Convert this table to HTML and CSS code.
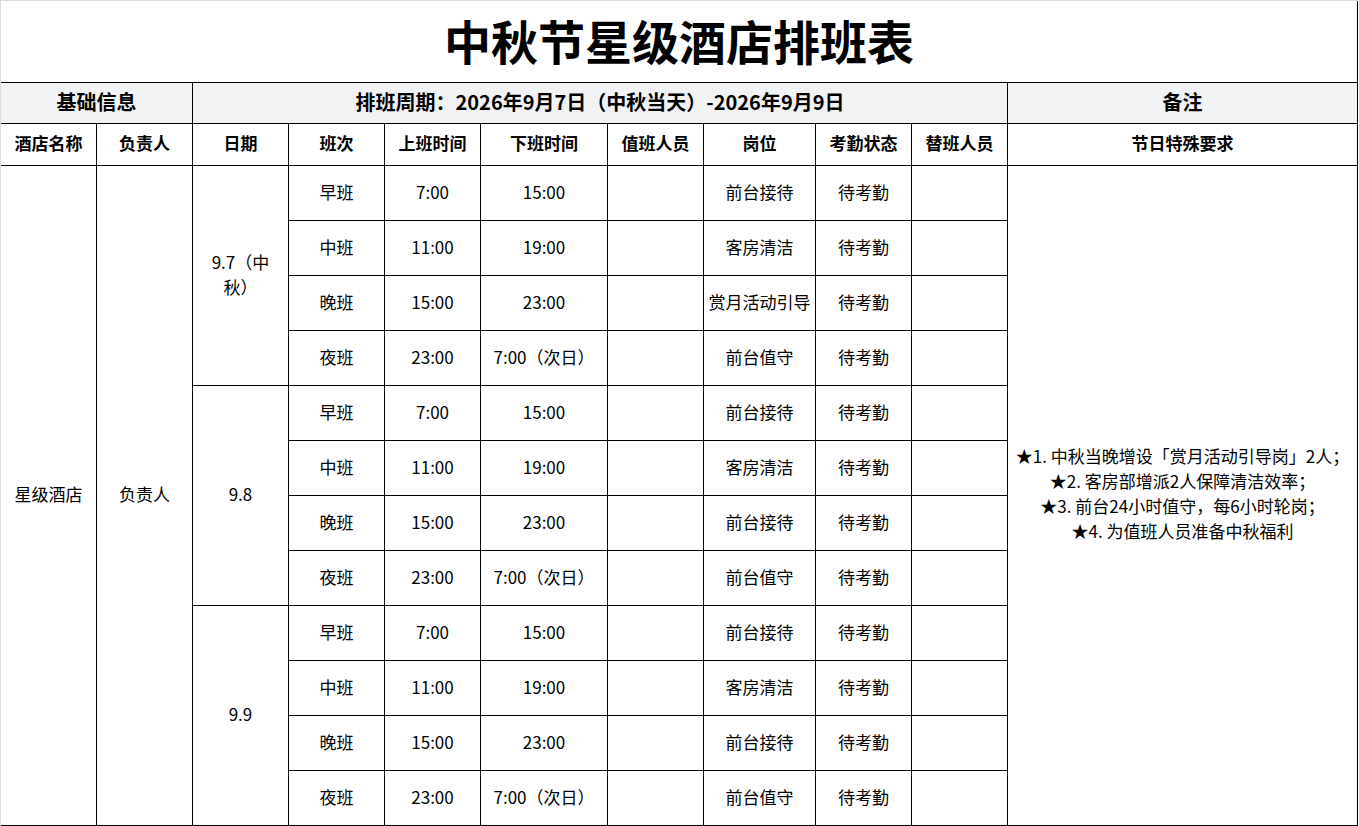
FILE: index.html
```html
<!DOCTYPE html>
<html lang="zh-CN">
<head>
<meta charset="utf-8">
<title>中秋节星级酒店排班表</title>
<link rel="stylesheet" href="styles.css">
</head>
<body>
<div class="sheet">
  <div class="cell title span-all">中秋节星级酒店排班表</div>

  <div class="cell head span-2">基础信息</div>
  <div class="cell head span-8">排班周期：2026年9月7日（中秋当天）-2026年9月9日</div>
  <div class="cell head">备注</div>

  <div class="cell sub">酒店名称</div>
  <div class="cell sub">负责人</div>
  <div class="cell sub">日期</div>
  <div class="cell sub">班次</div>
  <div class="cell sub">上班时间</div>
  <div class="cell sub">下班时间</div>
  <div class="cell sub">值班人员</div>
  <div class="cell sub">岗位</div>
  <div class="cell sub">考勤状态</div>
  <div class="cell sub">替班人员</div>
  <div class="cell sub">节日特殊要求</div>

  <div class="cell rows-12">星级酒店</div>
  <div class="cell rows-12">负责人</div>
  <div class="cell rows-4 date">9.7（中秋）</div>
  <div class="cell">早班</div><div class="cell">7:00</div><div class="cell">15:00</div><div class="cell"></div><div class="cell">前台接待</div><div class="cell">待考勤</div><div class="cell"></div>
  <div class="cell rows-12 notes">★1. 中秋当晚增设「赏月活动引导岗」2人；<br>★2. 客房部增派2人保障清洁效率；<br>★3. 前台24小时值守，每6小时轮岗；<br>★4. 为值班人员准备中秋福利</div>
  <div class="cell">中班</div><div class="cell">11:00</div><div class="cell">19:00</div><div class="cell"></div><div class="cell">客房清洁</div><div class="cell">待考勤</div><div class="cell"></div>
  <div class="cell">晚班</div><div class="cell">15:00</div><div class="cell">23:00</div><div class="cell"></div><div class="cell">赏月活动引导</div><div class="cell">待考勤</div><div class="cell"></div>
  <div class="cell">夜班</div><div class="cell">23:00</div><div class="cell">7:00（次日）</div><div class="cell"></div><div class="cell">前台值守</div><div class="cell">待考勤</div><div class="cell"></div>

  <div class="cell rows-4 date">9.8</div>
  <div class="cell">早班</div><div class="cell">7:00</div><div class="cell">15:00</div><div class="cell"></div><div class="cell">前台接待</div><div class="cell">待考勤</div><div class="cell"></div>
  <div class="cell">中班</div><div class="cell">11:00</div><div class="cell">19:00</div><div class="cell"></div><div class="cell">客房清洁</div><div class="cell">待考勤</div><div class="cell"></div>
  <div class="cell">晚班</div><div class="cell">15:00</div><div class="cell">23:00</div><div class="cell"></div><div class="cell">前台接待</div><div class="cell">待考勤</div><div class="cell"></div>
  <div class="cell">夜班</div><div class="cell">23:00</div><div class="cell">7:00（次日）</div><div class="cell"></div><div class="cell">前台值守</div><div class="cell">待考勤</div><div class="cell"></div>

  <div class="cell rows-4 date">9.9</div>
  <div class="cell">早班</div><div class="cell">7:00</div><div class="cell">15:00</div><div class="cell"></div><div class="cell">前台接待</div><div class="cell">待考勤</div><div class="cell"></div>
  <div class="cell">中班</div><div class="cell">11:00</div><div class="cell">19:00</div><div class="cell"></div><div class="cell">客房清洁</div><div class="cell">待考勤</div><div class="cell"></div>
  <div class="cell">晚班</div><div class="cell">15:00</div><div class="cell">23:00</div><div class="cell"></div><div class="cell">前台接待</div><div class="cell">待考勤</div><div class="cell"></div>
  <div class="cell">夜班</div><div class="cell">23:00</div><div class="cell">7:00（次日）</div><div class="cell"></div><div class="cell">前台值守</div><div class="cell">待考勤</div><div class="cell"></div>
</div>
</body>
</html>
```

FILE: styles.css
```css
html, body {
  margin: 0;
  padding: 0;
  background: #ffffff;
}

body {
  font-family: "Noto Sans CJK SC", "Noto Sans", sans-serif;
  color: #000000;
}

.sheet {
  display: grid;
  grid-template-columns: 96px 96px 96px 96px 96px 127px 96px 112px 96px 96px 350px;
  grid-template-rows: 82px 41px 42px repeat(12, 55px);
  width: 1358px;
  box-sizing: border-box;
  border-top: 1px solid #dcdcdc;
  border-left: 1px solid #dcdcdc;
}

.cell {
  box-sizing: border-box;
  border-right: 1px solid #000;
  border-bottom: 1px solid #000;
  display: flex;
  align-items: center;
  justify-content: center;
  text-align: center;
  font-size: 17px;
  line-height: 25px;
  padding-bottom: 4px;
  white-space: normal;
}

.span-all { grid-column: span 11; }
.span-2 { grid-column: span 2; }
.span-8 { grid-column: span 8; }
.rows-12 { grid-row: span 12; }
.rows-4 { grid-row: span 4; }

.title {
  font-size: 47px;
  font-weight: 700;
  line-height: 1;
  padding-bottom: 5px;
}

.head {
  background: #f1f2f4;
  font-size: 20px;
  font-weight: 700;
}

.sub {
  font-size: 17px;
  font-weight: 700;
}

.date {
  padding: 0 12px 4px;
}

.notes {
  font-size: 17px;
  line-height: 25px;
  padding-bottom: 5px;
}
```
